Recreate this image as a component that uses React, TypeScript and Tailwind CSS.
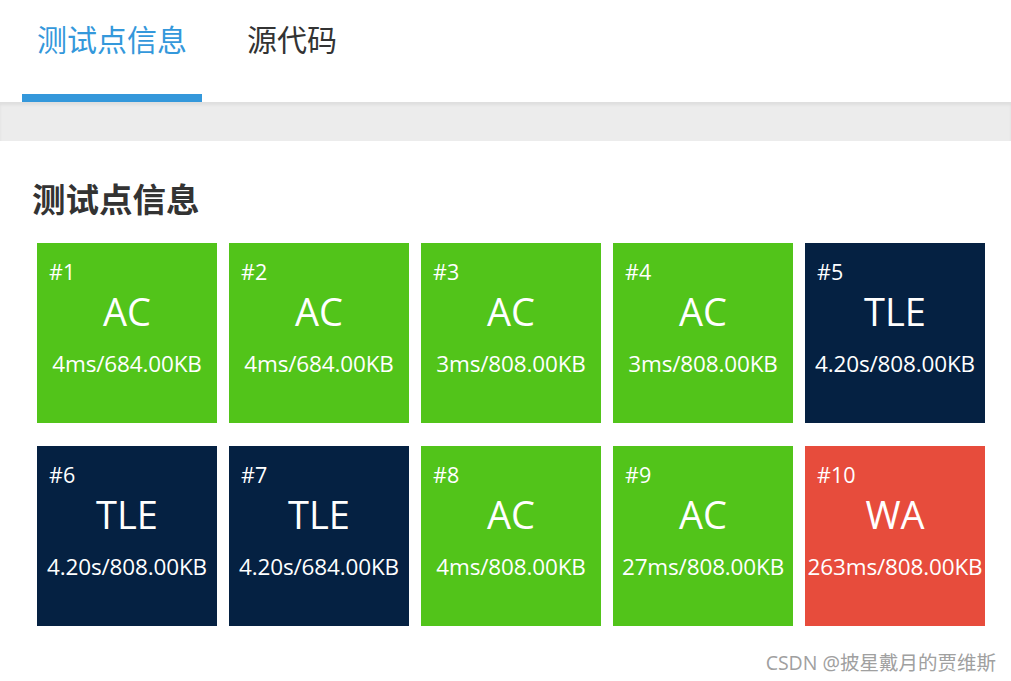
import React from 'react';

type Status = 'AC' | 'TLE' | 'WA';

interface TestCase {
    id: number;
    status: Status;
    time: string;
    memory: string;
}

const cases: TestCase[] = [
    { id: 1, status: 'AC', time: '4ms', memory: '684.00KB' },
    { id: 2, status: 'AC', time: '4ms', memory: '684.00KB' },
    { id: 3, status: 'AC', time: '3ms', memory: '808.00KB' },
    { id: 4, status: 'AC', time: '3ms', memory: '808.00KB' },
    { id: 5, status: 'TLE', time: '4.20s', memory: '808.00KB' },
    { id: 6, status: 'TLE', time: '4.20s', memory: '808.00KB' },
    { id: 7, status: 'TLE', time: '4.20s', memory: '684.00KB' },
    { id: 8, status: 'AC', time: '4ms', memory: '808.00KB' },
    { id: 9, status: 'AC', time: '27ms', memory: '808.00KB' },
    { id: 10, status: 'WA', time: '263ms', memory: '808.00KB' },
];

// 状态对应的背景色
const statusBg: Record<Status, string> = {
    AC: 'bg-[#52c41a]',
    TLE: 'bg-[#052142]',
    WA: 'bg-[#e74c3c]',
};

const CaseCard: React.FC<{ item: TestCase }> = ({ item }) => (
    <div className={`${statusBg[item.status]} h-[180px] w-[180px] text-white pt-[18px]`}>
        <div className="pl-3 text-[21.5px] leading-[21px]">#{item.id}</div>
        <div className="mt-[11px] text-center text-[38px] leading-[36px]">{item.status}</div>
        <div className="mt-[24px] text-center text-[22.5px] leading-[21px] whitespace-nowrap tracking-[-0.15px]">
            {item.time}/{item.memory}
        </div>
    </div>
);

const App: React.FC = () => {
    const tabs = [
        { id: 'cases', label: '测试点信息', active: true },
        { id: 'code', label: '源代码', active: false },
    ];

    return (
        <div className="relative h-[681px] w-[1011px] overflow-hidden bg-white font-['Open_Sans','Noto_Sans_CJK_SC',sans-serif]">
            {/* 顶部标签栏 */}
            <div className="flex h-[102px] gap-[30px] pl-[22px]">
                {tabs.map((tab) => (
                    <div key={tab.id} className="flex flex-col">
                        <div
                            className={`flex-1 px-[15px] pt-[25px] text-[30px] leading-[30px] whitespace-nowrap ${
                                tab.active ? 'text-[#3498db]' : 'text-[#333333]'
                            }`}
                        >
                            {tab.label}
                        </div>
                        <div className={`h-[8px] ${tab.active ? 'bg-[#3498db]' : 'bg-transparent'}`} />
                    </div>
                ))}
            </div>
            <div className="h-[39px] bg-[#ececec] shadow-[inset_0_3px_3px_rgba(0,0,0,0.06)]" />

            {/* 测试点列表 */}
            <div className="pl-[32px] pt-[42px]">
                <h2 className="text-[33.5px] leading-[33px] font-bold text-[#333333]">测试点信息</h2>
                <div className="ml-[5px] mt-[27px] grid grid-cols-[repeat(5,180px)] gap-x-[12px] gap-y-[23px]">
                    {cases.map((c) => (
                        <CaseCard key={c.id} item={c} />
                    ))}
                </div>
            </div>

            {/* 水印 */}
            <div className="absolute bottom-[7px] right-[15px] text-[19.5px] leading-[22px] text-[#a0a0a0]">
                CSDN @披星戴月的贾维斯
            </div>
        </div>
    );
};

export default App;
